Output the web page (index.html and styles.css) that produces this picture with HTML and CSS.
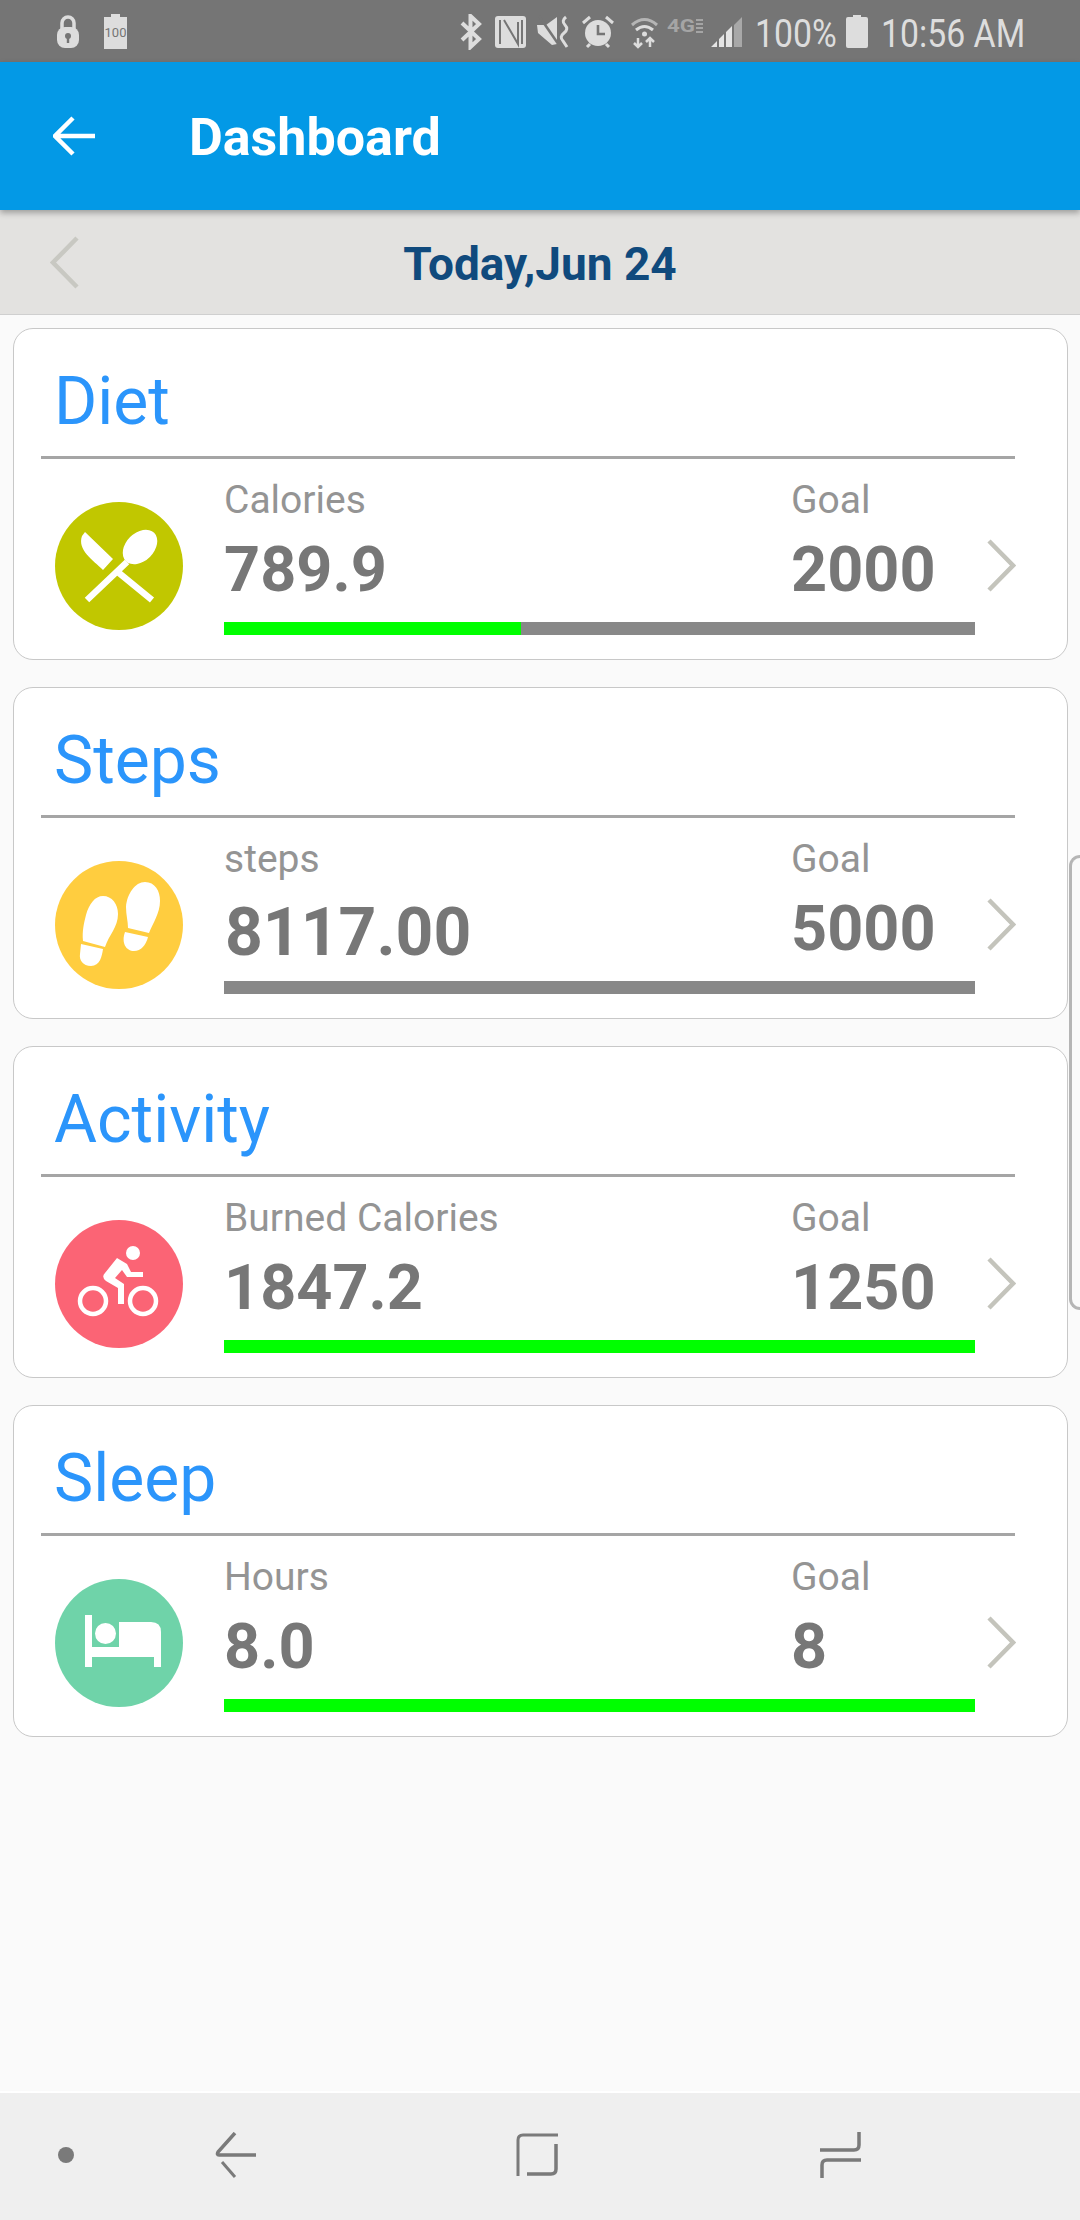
FILE: index.html
```html
<!doctype html>
<html lang="en">
  <head>
    <meta charset="UTF-8" />
    <title>Dashboard</title>
    <link rel="stylesheet" href="styles.css">
  </head>
  <body>
    <div class="page">
      <div class="status-bar">
        <div class="status-left">
          <svg class="status-lock" viewBox="0 0 22 33" width="22" height="33">
            <path d="M5 14V8a6 6 0 0 1 12 0v6" fill="none" stroke="#ddd" stroke-width="3.5" />
            <rect x="0" y="12" width="22" height="21" rx="8" fill="#ddd" />
            <circle cx="11" cy="21" r="3" fill="#757575" />
            <rect x="9.8" y="21" width="2.4" height="7" fill="#757575" />
          </svg>
          <svg class="status-saver" viewBox="0 0 23 35" width="23" height="35">
            <path d="M0 3h7V0h9v3h7v32H0z" fill="#ddd" />
            <text x="11.5" y="23" text-anchor="middle" class="status-saver-text">100</text>
          </svg>
        </div>
        <div class="status-right">
          <svg class="status-icons" viewBox="0 0 282 36" width="282" height="36">
            <path d="M2 9l17 16-8.500 8V2L19 10 2 26" fill="none" stroke="#ddd" stroke-width="4" />
            <rect x="35" y="2" width="31" height="32" rx="3" fill="#ddd" />
            <path d="M40 6v24M44 6l14 24V8M62 6v24" fill="none" stroke="#757575" stroke-width="2" />
            <path d="M77 11h9l11-8v27l-5 1-14-12z" fill="#ddd" />
            <path d="M79 2l22 32" stroke="#757575" stroke-width="2.500" />
            <path d="M106 3q-5 4-1 8t-1 8-1 8l4 6" fill="none" stroke="#ddd" stroke-width="3" />
            <circle cx="138" cy="19" r="13" fill="#ddd" />
            <path d="M138 11v9h7" fill="none" stroke="#757575" stroke-width="2.600" />
            <path d="M123 9l7-6M153 9l-7-6M127 33l3-3M149 33l-3-3" stroke="#ddd" stroke-width="3" />
            <path d="M172 11q12.500-11 25 0" fill="none" stroke="#b5b5b5" stroke-width="3" />
            <path d="M176 16q8.500-7 17 0" fill="none" stroke="#ddd" stroke-width="3" />
            <circle cx="184.500" cy="20" r="2.500" fill="#ddd" />
            <path d="M178 24v9M174 29l4 4 4-4M190 33v-9M186 28l4-4 4 4" fill="none" stroke="#ddd" stroke-width="2.500" />
            <text x="207" y="18" textLength="28" lengthAdjust="spacingAndGlyphs" class="status-net-text">4G</text>
            <path d="M236 5h7v2h-7zM236 9h7v2h-7zM236 13h7v2h-7zM236 17h7v2h-7z" fill="#a5a5a5" />
            <path d="M274 11l8-8v30h-8z" fill="#a8a8a8" />
            <path d="M251 33l6-6v6zM259 25l5-5v13h-5zM266 18l6-6v21h-6z" fill="#e4e4e4" />
          </svg>
          <span class="status-text status-percent">100%</span>
          <svg class="status-battery" viewBox="0 0 22 33" width="22" height="33">
            <path d="M0 4q0-2 2-2h5V0h8v2h5q2 0 2 2v27q0 2-2 2H2q-2 0-2-2z" fill="#ddd" />
          </svg>
          <span class="status-text status-time">10:56 AM</span>
        </div>
      </div>

      <header class="app-bar">
        <svg class="app-bar-back" viewBox="0 0 42 40" width="42" height="40">
          <path d="M20 2L2 20l18 18M2 20h40" fill="none" stroke="#fff" stroke-width="4.500" />
        </svg>
        <h1 class="app-bar-title">Dashboard</h1>
      </header>

      <div class="date-bar">
        <svg class="chevron" viewBox="0 0 29 53" width="29" height="53">
          <path d="M27 2L3 26.500 27 51" fill="none" stroke="#c8c8c2" stroke-width="4.500" />
        </svg>
        <div class="date-text">Today,Jun 24</div>
        <div></div>
      </div>

      <main class="card-list">
        <section class="card">
          <h2 class="card-title">Diet</h2>
          <div class="card-line"></div>
          <div class="card-row">
            <svg class="card-icon" viewBox="0 0 128 128" width="128" height="128">
              <circle cx="64" cy="64" r="64" fill="#c1c700" />
              <ellipse cx="85" cy="45" rx="20" ry="14" transform="rotate(-45 85 45)" fill="#fff" />
              <path d="M72 60L32 98M64 71l33 27" stroke="#fff" stroke-width="6.500" />
              <path d="M30 30l28 27-10 11C38 58 22 48 27 34z" fill="#fff" />
            </svg>
            <div class="card-body">
              <div class="stats">
                <div>
                  <div class="stat-label">Calories</div>
                  <div class="stat-value">789.9</div>
                </div>
                <div>
                  <div class="stat-label">Goal</div>
                  <div class="stat-value">2000</div>
                </div>
              </div>
              <div class="progress"><div class="progress-fill" style="width: 39.5%"></div></div>
            </div>
            <svg class="chevron card-chevron" viewBox="0 0 29 53" width="29" height="53">
              <path d="M2 2l24 24.500L2 51" fill="none" stroke="#c4c4bc" stroke-width="4.500" />
            </svg>
          </div>
        </section>

        <section class="card">
          <h2 class="card-title">Steps</h2>
          <div class="card-line"></div>
          <div class="card-row">
            <svg class="card-icon" viewBox="0 0 128 128" width="128" height="128">
              <circle cx="64" cy="64" r="64" fill="#ffcd3f" />
              <path d="M48 35c9 0 15 8 15 18 0 13-9 21-13 33l-22-6c-1-10 1-18 3-26 3-11 9-19 17-19z" fill="#fff" />
              <path d="M26 83l22 5c-1 7-3 17-12 17-8 0-12-6-11-12z" fill="#fff" />
              <path d="M90 21c10 0 15 9 15 19 0 12-7 22-11 32l-21-5c0-7-2-13-2-21 1-13 9-25 19-25z" fill="#fff" />
              <path d="M70 71l23 5c-2 8-7 14-14 14-8 0-13-8-9-19z" fill="#fff" />
            </svg>
            <div class="card-body">
              <div class="stats">
                <div>
                  <div class="stat-label">steps</div>
                  <div class="stat-value stat-value-big">8117.00</div>
                </div>
                <div>
                  <div class="stat-label">Goal</div>
                  <div class="stat-value">5000</div>
                </div>
              </div>
              <div class="progress"></div>
            </div>
            <svg class="chevron card-chevron" viewBox="0 0 29 53" width="29" height="53">
              <path d="M2 2l24 24.500L2 51" fill="none" stroke="#c4c4bc" stroke-width="4.500" />
            </svg>
          </div>
        </section>

        <section class="card">
          <h2 class="card-title">Activity</h2>
          <div class="card-line"></div>
          <div class="card-row">
            <svg class="card-icon" viewBox="0 0 128 128" width="128" height="128">
              <circle cx="64" cy="64" r="64" fill="#fb6475" />
              <circle cx="78" cy="33" r="7" fill="#fff" />
              <circle cx="38" cy="81" r="13" fill="none" stroke="#fff" stroke-width="4.500" />
              <circle cx="88" cy="81" r="13" fill="none" stroke="#fff" stroke-width="4.500" />
              <path d="M62 38l10 6 4 8h12v5H72l-5-7-7 8 9 6v20h-6V68l-12-7q-5-4-1-8z" fill="#fff" />
            </svg>
            <div class="card-body">
              <div class="stats">
                <div>
                  <div class="stat-label">Burned Calories</div>
                  <div class="stat-value">1847.2</div>
                </div>
                <div>
                  <div class="stat-label">Goal</div>
                  <div class="stat-value">1250</div>
                </div>
              </div>
              <div class="progress"><div class="progress-fill" style="width: 100%"></div></div>
            </div>
            <svg class="chevron card-chevron" viewBox="0 0 29 53" width="29" height="53">
              <path d="M2 2l24 24.500L2 51" fill="none" stroke="#c4c4bc" stroke-width="4.500" />
            </svg>
          </div>
        </section>

        <section class="card">
          <h2 class="card-title">Sleep</h2>
          <div class="card-line"></div>
          <div class="card-row">
            <svg class="card-icon" viewBox="0 0 128 128" width="128" height="128">
              <circle cx="64" cy="64" r="64" fill="#6fd3a9" />
              <path d="M30 36h7v32h27V43h32q10 0 10 10v35h-7V78H37v10h-7z" fill="#fff" />
              <circle cx="50.500" cy="54.500" r="10.500" fill="#fff" />
            </svg>
            <div class="card-body">
              <div class="stats">
                <div>
                  <div class="stat-label">Hours</div>
                  <div class="stat-value">8.0</div>
                </div>
                <div>
                  <div class="stat-label">Goal</div>
                  <div class="stat-value">8</div>
                </div>
              </div>
              <div class="progress"><div class="progress-fill" style="width: 100%"></div></div>
            </div>
            <svg class="chevron card-chevron" viewBox="0 0 29 53" width="29" height="53">
              <path d="M2 2l24 24.500L2 51" fill="none" stroke="#c4c4bc" stroke-width="4.500" />
            </svg>
          </div>
        </section>
      </main>

      <nav class="nav-bar">
        <div class="nav-dot"></div>
        <svg class="nav-icon nav-back" viewBox="0 0 41 46" width="41" height="46">
          <path d="M20 1L3 20q-1.500 3 1 3h37" fill="none" stroke="#7a7a7a" stroke-width="3.500" />
          <path d="M7 30l13 15" fill="none" stroke="#7a7a7a" stroke-width="3" />
        </svg>
        <svg class="nav-icon nav-home" viewBox="0 0 42 46" width="42" height="46">
          <path d="M42 3H7Q2 3 2 8v36" fill="none" stroke="#7a7a7a" stroke-width="3" />
          <path d="M40 12v25q0 5-5 5H11" fill="none" stroke="#7a7a7a" stroke-width="3.500" />
        </svg>
        <svg class="nav-icon nav-recent" viewBox="0 0 41 46" width="41" height="46">
          <path d="M39 0v13q0 5-5 5H0" fill="none" stroke="#7a7a7a" stroke-width="3.500" />
          <path d="M41 28H7q-5 0-5 5v13" fill="none" stroke="#7a7a7a" stroke-width="3.500" />
        </svg>
      </nav>

      <div class="edge-handle"></div>
    </div>
  </body>
</html>
```

FILE: styles.css
```css
:root {
  --status-bg: #757575;
  --status-fg: #dddddd;
  --app-blue: #0399e6;
  --title-blue: #2b95fb;
  --date-blue: #104a7d;
  --label-grey: #949494;
  --value-grey: #777777;
  --bar-grey: #888888;
  --bar-green: #00ff00;
  --page-bg: #fafafa;
}

* {
  box-sizing: border-box;
  font-family: Roboto, "Liberation Sans", sans-serif;
}

body {
  margin: 0;
  background-color: var(--page-bg);
}

.page {
  position: relative;
  display: flex;
  flex-direction: column;
  height: 2220px;
  overflow: hidden;
}

/* status bar */
.status-bar {
  display: flex;
  justify-content: space-between;
  align-items: flex-start;
  height: 62px;
  padding: 14px 58px 0 57px;
  background: var(--status-bg);
}

.status-left {
  display: flex;
  gap: 25px;
}

.status-right {
  display: flex;
  align-items: flex-start;
}

.status-lock {
  margin-top: 1px;
}

.status-saver-text {
  font-size: 13px;
  fill: #757575;
}

.status-net-text {
  font-size: 18px;
  font-weight: 700;
  fill: #a5a5a5;
}

.status-icons {
  display: block;
}

.status-text {
  display: block;
  height: 36px;
  margin-top: -2px;
  font-size: 38px;
  line-height: 44px;
  color: var(--status-fg);
  white-space: nowrap;
  transform-origin: left center;
  transform: scaleX(0.89);
}

.status-percent {
  width: 79px;
  margin-left: 13px;
}

.status-battery {
  margin: 1px 0 0 12px;
}

.status-time {
  width: 141px;
  margin-left: 13px;
}

/* app bar */
.app-bar {
  position: relative;
  z-index: 2;
  display: flex;
  align-items: center;
  height: 148px;
  padding-left: 53px;
  background: var(--app-blue);
  box-shadow: 0 3px 6px rgba(0, 0, 0, 0.3);
}

.app-bar-back {
  margin-right: 94px;
}

.app-bar-title {
  margin: 0;
  padding-top: 2px;
  font-size: 52px;
  font-weight: 700;
  color: #fff;
}

/* date row */
.date-bar {
  display: grid;
  grid-template-columns: 1fr auto 1fr;
  align-items: center;
  height: 105px;
  padding: 0 50px;
  background: #e3e2e0;
  border-bottom: 1px solid #cfcfcf;
}

.date-text {
  padding-top: 4px;
  font-size: 46px;
  font-weight: 700;
  color: var(--date-blue);
}

.chevron {
  display: block;
}

/* cards */
.card-list {
  flex: 1;
  padding: 13px 12px 0 13px;
}

.card {
  height: 332px;
  margin-bottom: 27px;
  padding-left: 27px;
  background: #fff;
  border: 1px solid #c8c8c8;
  border-radius: 20px;
}

.card-title {
  height: 127px;
  margin: 0;
  padding: 40px 0 0 13px;
  font-size: 66px;
  font-weight: 400;
  line-height: 66px;
  color: var(--title-blue);
}

.card-line {
  width: 974px;
  height: 3px;
  background: #a5a5a5;
}

.card-row {
  display: flex;
  align-items: flex-start;
}

.card-icon {
  flex: none;
  margin: 43px 41px 0 14px;
}

.card-body {
  width: 751px;
  padding-top: 19px;
}

.stats {
  display: grid;
  grid-template-columns: 567px 1fr;
}

.stat-label {
  font-size: 39px;
  line-height: 44px;
  color: var(--label-grey);
}

.stat-value {
  margin-top: 13px;
  font-size: 63px;
  font-weight: 700;
  line-height: 70px;
  color: var(--value-grey);
}

.stat-value-big {
  margin: 17px 0 -4px 1px;
  font-size: 66px;
}

.progress {
  height: 13px;
  margin-top: 17px;
  background: var(--bar-grey);
}

.progress-fill {
  height: 100%;
  background: var(--bar-green);
}

.card-chevron {
  flex: none;
  margin: 80px 0 0 12px;
}

/* bottom nav */
.nav-bar {
  display: flex;
  align-items: flex-start;
  height: 129px;
  padding: 39px 0 0 58px;
  background: #efefef;
  border-top: 2px solid #fff;
}

.nav-dot {
  width: 16px;
  height: 16px;
  margin-top: 15px;
  border-radius: 50%;
  background: #7a7a7a;
}

.nav-back {
  margin-left: 141px;
}

.nav-home {
  margin-left: 260px;
}

.nav-recent {
  margin-left: 262px;
}

/* edge panel handle, sits over the page */
.edge-handle {
  position: absolute;
  top: 855px;
  right: 0;
  width: 11px;
  height: 455px;
  border: 3px solid #b5b5b5;
  border-right: none;
  border-radius: 18px 0 0 18px;
  background: var(--page-bg);
}
```
